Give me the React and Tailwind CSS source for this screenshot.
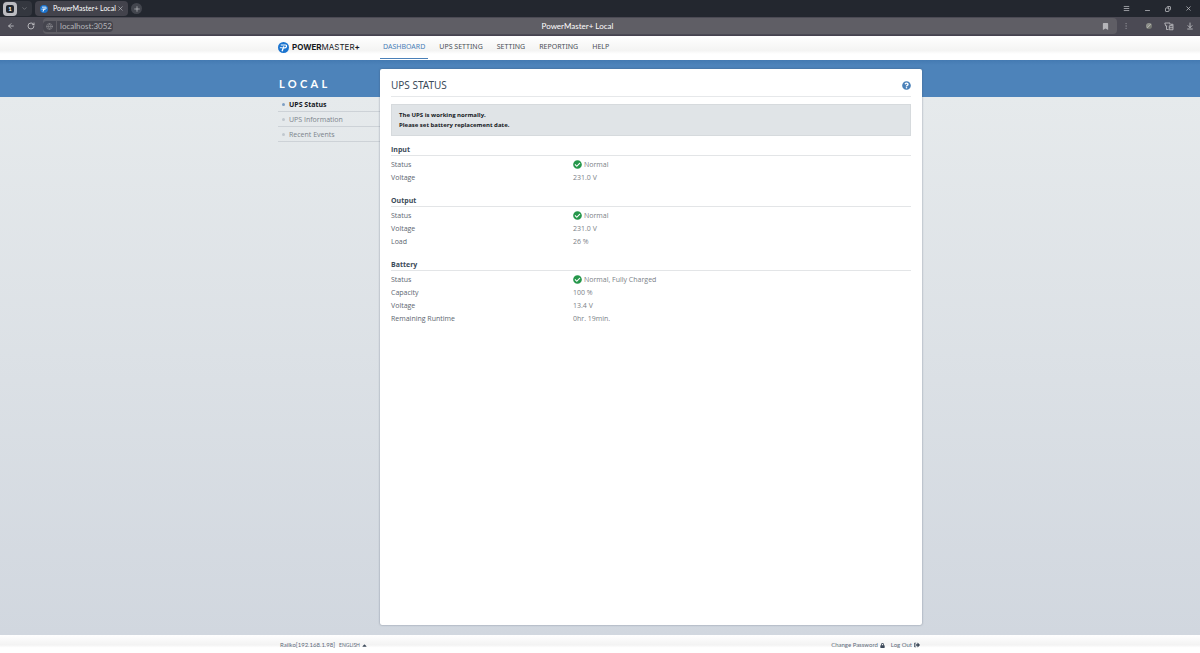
import { FaCheckCircle, FaQuestionCircle, FaLock, FaSignOutAlt, FaCaretUp, FaBookmark } from 'react-icons/fa'
import { ArrowLeft, RotateCw, X, Plus, ChevronDown, Menu, Minus, Copy, MoreVertical, Globe, ArrowDownToLine } from 'lucide-react'

const menu = ['DASHBOARD', 'UPS SETTING', 'SETTING', 'REPORTING', 'HELP']

const sideLinks = ['UPS Status', 'UPS Information', 'Recent Events']

const sections = [
    {
        title: 'Input',
        rows: [
            { label: 'Status', value: 'Normal', ok: true },
            { label: 'Voltage', value: '231.0 V' },
        ],
    },
    {
        title: 'Output',
        rows: [
            { label: 'Status', value: 'Normal', ok: true },
            { label: 'Voltage', value: '231.0 V' },
            { label: 'Load', value: '26 %' },
        ],
    },
    {
        title: 'Battery',
        rows: [
            { label: 'Status', value: 'Normal, Fully Charged', ok: true },
            { label: 'Capacity', value: '100 %' },
            { label: 'Voltage', value: '13.4 V' },
            { label: 'Remaining Runtime', value: '0hr. 19min.' },
        ],
    },
]

function LogoMark({ className }) {
    return (
        <svg viewBox="0 0 24 24" className={className} aria-hidden="true">
            <circle cx="12" cy="12" r="12" fill="#1b74cf" />
            <path d="M6 6.5h10.5q2.5 0 2 3t-3.5 3.500h-4" fill="none" stroke="#fff" strokeWidth="2.6" />
            <path d="M12.500 9.500 9 20" fill="none" stroke="#fff" strokeWidth="3" />
            <path d="M4 12.500h6" fill="none" stroke="#fff" strokeWidth="2" />
        </svg>
    )
}

function ExtensionsIcon() {
    return (
        <svg viewBox="0 0 20 18" className="w-[10px] h-[9px]" fill="none" stroke="currentColor" strokeWidth="1.6" aria-hidden="true">
            <path d="M1.5 2H12v3M1.5 2l2 6h3M5 8v7h4" />
            <path d="M10.5 7.5h7.5v8h-7.5zM10.5 11.5H18M14 7.5V4.5h4v3" />
        </svg>
    )
}

function TabStrip() {
    return (
        <div className="flex items-center h-[17px] pl-[3px] pr-2 bg-[#23272f] text-[#c3c4c8]">
            <div className="flex items-center h-[15px] bg-[#34373f] rounded">
                <button aria-label="Tab groups" className="flex items-center justify-center w-[14px] h-[14px] rounded bg-[#bcbcc1]">
                    <span className="flex items-center justify-center w-2 h-2 rounded-xs bg-[#22262d] text-white text-[6px] leading-none font-bold">1</span>
                </button>
                <button aria-label="Tab list" className="flex items-center justify-center w-[15px] h-[14px] text-[#8c8d93]">
                    <ChevronDown size={7} />
                </button>
            </div>
            <div className="flex items-center w-[93px] h-[15px] ml-[3px] pl-[5px] pr-1 rounded bg-[#43434c]">
                <LogoMark className="w-[8px] h-[8px]" />
                <span className="ml-[5px] flex-1 text-[7px] leading-none text-white whitespace-nowrap">PowerMaster+ Local</span>
                <button aria-label="Close tab"><X size={7} /></button>
            </div>
            <button aria-label="New tab" className="flex items-center justify-center w-[11px] h-[11px] ml-[3px] rounded-full bg-[#43464e]">
                <Plus size={8} />
            </button>
            <div className="flex items-center gap-[14px] ml-auto">
                <button aria-label="Menu"><Menu size={7} strokeWidth={2.5} /></button>
                <button aria-label="Minimize"><Minus size={7} strokeWidth={2.5} className="mt-1" /></button>
                <button aria-label="Restore"><Copy size={6} strokeWidth={3} className="-scale-x-100" /></button>
                <button aria-label="Close window"><X size={7} strokeWidth={2.5} /></button>
            </div>
        </div>
    )
}

function AddressBar() {
    return (
        <div className="flex items-center h-[19px] pl-[7px] pr-[6px] bg-[#4b4a54] border-b border-[#46424f] text-[#c6c6ca]">
            <button aria-label="Back"><ArrowLeft size={8} strokeWidth={2.5} /></button>
            <button aria-label="Reload" className="ml-3"><RotateCw size={8} strokeWidth={2.5} /></button>
            <div className="flex flex-1 items-center h-[16px] ml-2 rounded bg-[#5f5e65]">
                <button aria-label="Site information" className="flex items-center justify-center w-[13px] h-[11px] rounded-l bg-[#45454e] text-[#8f8f95]">
                    <Globe size={7} />
                </button>
                <input
                    aria-label="Address"
                    defaultValue="localhost:3052"
                    className="w-[56px] h-[11px] ml-px pl-[3px] rounded-r bg-[#45454e] text-[8px] leading-none text-[#b5b5b9] outline-none"
                />
                <span className="flex-1 pr-[60px] text-center text-[8px] leading-none text-white">PowerMaster+ Local</span>
                <button aria-label="Bookmark" className="mr-2 text-[#b5b5b9]"><FaBookmark size={7} /></button>
            </div>
            <div className="flex items-center ml-[5px]">
                <button aria-label="More" className="text-[#85858c]"><MoreVertical size={8} /></button>
                <span className="w-[6px] h-[6px] ml-4 rounded-full bg-[linear-gradient(135deg,#8f918c_45%,#b0b2ac_50%,#777973_60%)]" />
                <button aria-label="Extensions" className="ml-[12px]"><ExtensionsIcon /></button>
                <button aria-label="Downloads" className="ml-[12px]"><ArrowDownToLine size={8} strokeWidth={2.5} /></button>
            </div>
        </div>
    )
}

function Header() {
    return (
        <header className="h-6 bg-[linear-gradient(#ffffff_0%,#f4f4f3_60%,#ffffff_75%)]">
            <div className="flex w-full max-w-[644px] h-full mx-auto">
                <a href="#home" className="flex items-center w-[102px] pb-[2px] text-[#171a1e]">
                    <LogoMark className="w-[11px] h-[11px]" />
                    <span className="ml-[3px] font-['Inter',sans-serif] text-[8px] leading-none whitespace-nowrap">
                        <b>POWER</b>MASTER<b>+</b>
                    </span>
                </a>
                <nav className="flex h-[23px] font-['Noto_Sans',sans-serif]">
                    {menu.map((item, i) => (
                        <a
                            key={item}
                            href={`#${item.toLowerCase().replace(' ', '-')}`}
                            className={`flex items-center h-full px-[3px] mr-2 text-[7px] whitespace-nowrap border-b ${i === 0
                                    ? 'text-[#4a80b8] border-[#4a80b8]'
                                    : 'text-[#4b5057] border-transparent'
                                }`}
                        >
                            {item}
                        </a>
                    ))}
                </nav>
            </div>
        </header>
    )
}

function Sidebar() {
    return (
        <aside className="w-[102px] shrink-0">
            <h2 className="h-[37px] pl-px pt-[17px] font-['Lato',sans-serif] text-[11px] leading-[14px] font-bold tracking-[0.3em] text-white">LOCAL</h2>
            <ul>
                {sideLinks.map((link, i) => (
                    <li key={link} className="border-b border-[#cdd2d7]">
                        <a
                            href={`#${link.toLowerCase().replace(' ', '-')}`}
                            className={`flex items-center h-[14px] pt-px pl-1 text-[7px] leading-[13px] ${i === 0 ? 'font-bold text-[#14181d]' : 'text-[#7c848c]'}`}
                        >
                            <span className={`w-[3px] h-[3px] mr-1 rounded-full ${i === 0 ? 'bg-[#7e9fc4]' : 'bg-[#c1c8cf]'}`} />
                            {link}
                        </a>
                    </li>
                ))}
            </ul>
        </aside>
    )
}

function StatusSection({ title, rows }) {
    return (
        <section className="mb-[9px]">
            <h3 className="h-[13px] text-[7px] leading-[13px] font-bold text-[#3c4b59] border-b border-[#e3e5e7]">{title}</h3>
            <table className="w-full mt-[2px] mb-[10px] text-[7px] leading-[13px]">
                <tbody>
                    {rows.map((row) => (
                        <tr key={row.label}>
                            <th scope="row" className="w-[35%] p-0 text-left font-normal text-[#5c6670]">{row.label}</th>
                            <td className="p-0 text-[#7b8187]">
                                <span className="flex items-center">
                                    {row.ok && <FaCheckCircle size={9} className="mr-[2px] text-[#26974b]" />}
                                    {row.value}
                                </span>
                            </td>
                        </tr>
                    ))}
                </tbody>
            </table>
        </section>
    )
}

function Footer() {
    return (
        <footer className="h-[18px] bg-[linear-gradient(#ffffff_0%,#f3f3f3_55%,#ffffff_70%)] font-['Lato',sans-serif] text-[6px] leading-[10px] text-[#5f6c7b]">
            <div className="flex items-center w-full max-w-[644px] h-full mx-auto pt-[2px] px-[2px]">
                <span>Railko[192.168.1.98]</span>
                <button className="flex items-center ml-1 text-[5px]">
                    ENGLISH <FaCaretUp size={7} className="ml-px text-[#3d4a5a]" />
                </button>
                <a href="#password" className="flex items-center ml-auto">
                    Change Password <FaLock size={5} className="ml-[2px] text-[#3d4a5a]" />
                </a>
                <a href="#logout" className="flex items-center ml-[6px]">
                    Log Out <FaSignOutAlt size={6} className="ml-[2px] text-[#3d4a5a]" />
                </a>
            </div>
        </footer>
    )
}

export default function App() {
    return (
        <div className="flex flex-col min-h-screen font-['Open_Sans',sans-serif]">
            {/* Browser */}
            <div className="font-['Lato',sans-serif]">
                <TabStrip />
                <AddressBar />
            </div>

            <Header />

            {/* Content */}
            <main className="flex flex-1 bg-[linear-gradient(#447ab2_0,#4d83ba_5px,#4d83ba_37px,#e6eaec_37px,#d1d7df_100%)]">
                <div className="flex w-full max-w-[644px] mx-auto">
                    <Sidebar />
                    <div className="flex-1 mt-[9px] mb-[10px] px-[11px] rounded-xs bg-white shadow-[0_0_2px_rgba(60,75,95,0.6)]">
                        <div className="flex items-center justify-between h-7 pt-[5px] border-b border-[#e6e8ea]">
                            <h1 className="font-['Noto_Sans',sans-serif] text-[10px] text-[#3c4b59]">UPS STATUS</h1>
                            <button aria-label="Help" className="text-[#4a80b8]"><FaQuestionCircle size={9} /></button>
                        </div>
                        <div className="mt-[7px] mb-[7px] px-[7px] py-[5px] border border-[#d6dadd] bg-[#e0e4e7] text-[6px] leading-[10px] font-bold text-[#15191e]">
                            <p>The UPS is working normally.</p>
                            <p>Please set battery replacement date.</p>
                        </div>
                        {sections.map((section) => (
                            <StatusSection key={section.title} {...section} />
                        ))}
                    </div>
                </div>
            </main>

            <Footer />
        </div>
    )
}
